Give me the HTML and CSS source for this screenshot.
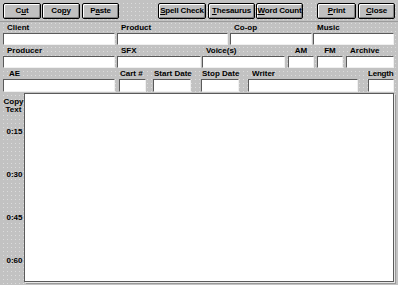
FILE: index.html
```html
<!DOCTYPE html>
<html lang="en">
<head>
    <meta charset="UTF-8">
    <meta name="viewport" content="width=device-width, initial-scale=1.0">
    <title>Copy</title>
    <link rel="stylesheet" href="styles.css">
</head>
<body>
    <div class="win">
        <div class="toolbar">
            <button class="btn cut">C<u>u</u>t</button>
            <button class="btn copy">Co<u>p</u>y</button>
            <button class="btn paste">P<u>a</u>ste</button>
            <button class="btn spell"><u>S</u>pell Check</button>
            <button class="btn thes"><u>T</u>hesaurus</button>
            <button class="btn words"><u>W</u>ord Count</button>
            <button class="btn print"><u>P</u>rint</button>
            <button class="btn close"><u>C</u>lose</button>
        </div>

        <div class="row">
            <div class="field client"><label>Client</label><input></div>
            <div class="field product"><label>Product</label><input></div>
            <div class="field coop"><label>Co-op</label><input></div>
            <div class="field music"><label>Music</label><input></div>
        </div>
        <div class="row">
            <div class="field producer"><label>Producer</label><input></div>
            <div class="field sfx"><label>SFX</label><input></div>
            <div class="field voice"><label>Voice(s)</label><input></div>
            <div class="field am"><label class="mid">AM</label><input></div>
            <div class="field fm"><label class="mid">FM</label><input></div>
            <div class="field archive"><label>Archive</label><input></div>
        </div>
        <div class="row last">
            <div class="field ae"><label class="ae-l">AE</label><input></div>
            <div class="field cart"><label class="tight">Cart #</label><input></div>
            <div class="field start"><label class="tight">Start Date</label><input></div>
            <div class="field stop"><label class="tight">Stop Date</label><input></div>
            <div class="field writer"><label>Writer</label><input></div>
            <div class="field length"><label class="flush">Length</label><input></div>
        </div>

        <div class="copyarea">
            <div class="marks">
                <div class="title">Copy<br>Text</div>
                <div class="tick">0:15</div>
                <div class="tick">0:30</div>
                <div class="tick">0:45</div>
                <div class="tick">0:60</div>
            </div>
            <textarea class="pad"></textarea>
        </div>
    </div>
</body>
</html>
```

FILE: styles.css
```css
*{
    padding: 0;
    margin: 0;
    box-sizing: border-box;
}
body{
    width: 398px;
    height: 285px;
    overflow: hidden;
    font-family: "Liberation Sans", Arial, sans-serif;
    font-weight: bold;
    font-size: 8px;
    color: #000;
    background: #c0c0c0;
}
.win{
    width: 398px;
    height: 285px;
    /* dithered grey face */
    background:
        linear-gradient(90deg, #c2c2c2 3px, transparent 3px) 0 0/4px 4px,
        linear-gradient(#c2c2c2 3px, #dcdcdc 3px) 0 0/4px 4px;
}
.toolbar{
    display: flex;
    height: 22px;
    padding: 3px 0 0 3px;
    border-bottom: 1px solid #9c9c9c;
}
.btn{
    height: 16px;
    padding: 0;
    border: 1px solid #000;
    border-radius: 2px;
    background: #c0c0c0;
    box-shadow: inset 1px 1px #fff, inset -1px -1px #808080;
    font: inherit;
    letter-spacing: -0.15px;
    color: #000;
    text-align: center;
    line-height: 12px;
    white-space: nowrap;
    overflow: hidden;
}
.cut{ width: 38px; }
.copy{ width: 38px; margin-left: 1px; }
.paste{ width: 37px; margin-left: 2px; }
.spell{ width: 48px; margin-left: 39px; }
.thes{ width: 47px; margin-left: 2px; }
.words{ width: 47px; margin-left: 1px; }
.print{ width: 39px; margin-left: 14px; }
.close{ width: 37px; margin-left: 2px; }

.row{
    display: flex;
    padding-left: 3px;
}
.field{
    display: flex;
    flex-direction: column;
}
.field label{
    height: 11px;
    line-height: 12px;
    padding-left: 4px;
    white-space: nowrap;
}
.field label.tight{ padding-left: 1px; }
.field label.flush{ padding-left: 0; letter-spacing: -0.2px; }
.field label.ae-l{ padding-left: 6px; }
.field label.mid{ padding-left: 0; text-align: center; }
.field input{
    height: 12px;
    width: 100%;
    background: #fff;
    border: 1px solid;
    border-color: #5a5a5a #f0f0f0 #f0f0f0 #5a5a5a;
    outline: none;
}
.row.last input{ height: 13px; }

.client{ width: 112px; }
.product{ width: 111px; margin-left: 2px; }
.coop{ width: 82px; margin-left: 2px; }
.music{ width: 81px; margin-left: 1px; }

.producer{ width: 112px; }
.sfx{ width: 84px; margin-left: 2px; }
.voice{ width: 83px; margin-left: 1px; }
.am{ width: 26px; margin-left: 3px; }
.fm{ width: 26px; margin-left: 3px; }
.archive{ width: 48px; margin-left: 3px; }

.ae{ width: 112px; }
.cart{ width: 27px; margin-left: 4px; }
.start{ width: 38px; margin-left: 7px; }
.stop{ width: 38px; margin-left: 10px; }
.writer{ width: 110px; margin-left: 9px; }
.length{ width: 26px; margin-left: 10px; }

.copyarea{
    display: flex;
    margin-top: 1px;
    padding-left: 3px;
}
.marks{
    width: 21px;
    display: flex;
    flex-direction: column;
    align-items: center;
    padding-top: 5px;
    gap: 33px;
}
.title{
    line-height: 8px;
    text-align: center;
    margin-bottom: -20px;
}
.tick{
    line-height: 10px;
    padding-left: 2px;
}
.pad{
    width: 370px;
    height: 189px;
    background: #fff;
    border: 1px solid #5a5a5a;
    box-shadow: 1px 1px #e8e8e8, 2px 2px #9a9a9a;
    resize: none;
    outline: none;
}
```
